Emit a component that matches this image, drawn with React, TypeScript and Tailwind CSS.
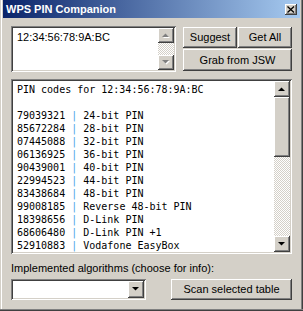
import React from "react";

const raised =
  "bg-[#d4d0c8] shadow-[inset_-1px_-1px_#404040,inset_1px_1px_#ffffff,inset_-2px_-2px_#808080]";
const sunken =
  "shadow-[inset_1px_1px_#808080,inset_-1px_-1px_#ffffff,inset_2px_2px_#404040,inset_-2px_-2px_#d4d0c8]";
const checker =
  "bg-[repeating-conic-gradient(#d4d0c8_0_25%,#ffffff_0_50%)] bg-[length:2px_2px]";

const ui = "font-['Liberation_Sans',Arial,sans-serif] text-[11px] text-black";

function Arrow({ up, disabled }: { up?: boolean; disabled?: boolean }) {
  const pts = up ? "0,4 7,4 3.5,0.5" : "0,0 7,0 3.5,3.5";
  return (
    <svg width="8" height="5" viewBox="0 0 8 5">
      {disabled && <polygon points={pts} fill="#ffffff" transform="translate(1,1)" />}
      <polygon points={pts} fill={disabled ? "#808080" : "#000000"} />
    </svg>
  );
}

function ArrowBtn({ up, disabled, h = "h-[16px]" }: { up?: boolean; disabled?: boolean; h?: string }) {
  return (
    <div className={`${raised} w-[16px] ${h} flex items-center justify-center shrink-0`}>
      <Arrow up={up} disabled={disabled} />
    </div>
  );
}

function Button({ children, className }: { children: React.ReactNode; className: string }) {
  return (
    <div className={`${raised} ${ui} flex items-center justify-center ${className}`}>
      {children}
    </div>
  );
}

const pins: [string, string][] = [
  ["79039321", "24-bit PIN"],
  ["85672284", "28-bit PIN"],
  ["07445088", "32-bit PIN"],
  ["06136925", "36-bit PIN"],
  ["90439001", "40-bit PIN"],
  ["22994523", "44-bit PIN"],
  ["83438684", "48-bit PIN"],
  ["99008185", "Reverse 48-bit PIN"],
  ["18398656", "D-Link PIN"],
  ["68606480", "D-Link PIN +1"],
  ["52910883", "Vodafone EasyBox"],
];

export default function App() {
  return (
    <div className="w-[303px] h-[311px] bg-[#d4d0c8] flex flex-col overflow-hidden shadow-[inset_1px_0_#d4d0c8,inset_2px_0_#ffffff,inset_-1px_0_#404040,inset_-2px_0_#808080]">
      {/* Title bar */}
      <div className="mx-[3px] h-[18px] shrink-0 bg-[linear-gradient(to_right,#0a246a,#a6caf0)] flex items-center justify-between pl-[3px] pr-[3px]">
        <span className="font-['Liberation_Sans',Arial,sans-serif] font-bold text-[11px] text-white">
          WPS PIN Companion
        </span>
        <div className={`${raised} w-[12px] h-[11px] flex items-center justify-center`}>
          <svg width="8" height="7" viewBox="0 0 8 7">
            <path d="M0.5 0.5 L7 6.5 M7 0.5 L0.5 6.5" stroke="#000" strokeWidth="1.3" />
          </svg>
        </div>
      </div>

      <div className="flex-1 flex flex-col pl-[11px] pt-[8px]">
        {/* Top row */}
        <div className="flex gap-[7px]">
          <div className={`${sunken} bg-white w-[165px] h-[46px] flex p-[2px]`}>
            <div className={`${ui} flex-1 pl-[4px] pt-[3px] leading-[13px]`}>12:34:56:78:9A:BC</div>
            <div className="flex flex-col w-[16px]">
              <ArrowBtn up disabled h="h-[15px]" />
              <div className={`flex-1 ${checker}`} />
              <ArrowBtn disabled h="h-[15px]" />
            </div>
          </div>
          <div className="flex flex-col gap-[1px] pt-[1px]">
            <div className="flex gap-[1px]">
              <Button className="w-[54px] h-[21px]">Suggest</Button>
              <Button className="w-[54px] h-[21px]">Get All</Button>
            </div>
            <Button className="w-[109px] h-[22px]">Grab from JSW</Button>
          </div>
        </div>

        {/* PIN list */}
        <div className={`${sunken} bg-white w-[281px] h-[175px] mt-[7px] flex p-[2px]`}>
          <div className="flex-1 pl-[4px] pt-[2px] font-['DejaVu_Sans_Mono',monospace] text-[10px] leading-[13px] text-black whitespace-pre overflow-hidden">
            <div>PIN codes for 12:34:56:78:9A:BC</div>
            <div>&nbsp;</div>
            {pins.map(([pin, name]) => (
              <div key={pin}>
                {pin} <span className="text-[#4a9fe8]">|</span> {name}
              </div>
            ))}
          </div>
          <div className="flex flex-col w-[16px]">
            <ArrowBtn up />
            <div className={`${raised} h-[60px] shrink-0`} />
            <div className={`flex-1 ${checker}`} />
            <ArrowBtn />
          </div>
        </div>

        {/* Algorithms */}
        <div className={`${ui} mt-[8px] leading-[13px]`}>Implemented algorithms (choose for info):</div>
        <div className="flex items-start mt-[4px] gap-[25px]">
          <div className={`${sunken} bg-white w-[135px] h-[21px] flex justify-end p-[2px]`}>
            <ArrowBtn h="h-[17px]" />
          </div>
          <Button className="w-[121px] h-[21px]">Scan selected table</Button>
        </div>
      </div>
      <div className="h-[3px] mx-[0px] shrink-0 shadow-[inset_0_-1px_#404040,inset_0_-2px_#808080]" />
    </div>
  );
}
